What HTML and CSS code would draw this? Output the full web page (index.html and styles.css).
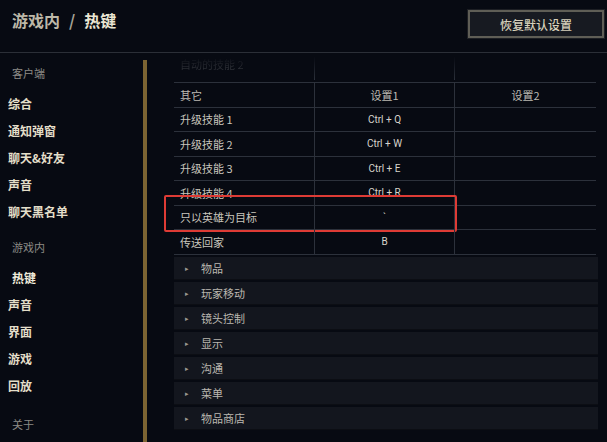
FILE: index.html
```html
<!DOCTYPE html>
<html lang="zh-CN">
<head>
    <meta charset="UTF-8">
    <title>游戏内 / 热键</title>
    <link rel="stylesheet" href="styles.css">
</head>
<body>
    <div class="top">
        <h1 class="title"><span class="crumb">游戏内</span><span class="sep">/</span><span>热键</span></h1>
        <button class="reset">恢复默认设置</button>
    </div>
    <div class="main">
        <nav class="side">
            <div class="group">客户端</div>
            <a class="item">综合</a>
            <a class="item">通知弹窗</a>
            <a class="item">聊天&amp;好友</a>
            <a class="item">声音</a>
            <a class="item">聊天黑名单</a>
            <div class="group gap">游戏内</div>
            <a class="item active">热键</a>
            <a class="item">声音</a>
            <a class="item">界面</a>
            <a class="item">游戏</a>
            <a class="item">回放</a>
            <div class="group about">关于</div>
        </nav>
        <div class="scroll"></div>
        <div class="content">
            <div class="row faded">
                <div class="cell name">自动的技能 2</div>
                <div class="cell"></div>
                <div class="cell"></div>
            </div>
            <div class="row head">
                <div class="cell name">其它</div>
                <div class="cell">设置1</div>
                <div class="cell">设置2</div>
            </div>
            <div class="row">
                <div class="cell name">升级技能 1</div>
                <div class="cell key">Ctrl + Q</div>
                <div class="cell"></div>
            </div>
            <div class="row">
                <div class="cell name">升级技能 2</div>
                <div class="cell key">Ctrl + W</div>
                <div class="cell"></div>
            </div>
            <div class="row">
                <div class="cell name">升级技能 3</div>
                <div class="cell key">Ctrl + E</div>
                <div class="cell"></div>
            </div>
            <div class="row">
                <div class="cell name">升级技能 4</div>
                <div class="cell key">Ctrl + R</div>
                <div class="cell"></div>
            </div>
            <div class="row marked">
                <div class="cell name">只以英雄为目标</div>
                <div class="cell key">`</div>
                <div class="cell"></div>
                <div class="highlight"></div>
            </div>
            <div class="row">
                <div class="cell name">传送回家</div>
                <div class="cell key">B</div>
                <div class="cell"></div>
            </div>

            <div class="sections">
                <div class="section"><span class="arrow">▸</span>物品</div>
                <div class="section"><span class="arrow">▸</span>玩家移动</div>
                <div class="section"><span class="arrow">▸</span>镜头控制</div>
                <div class="section"><span class="arrow">▸</span>显示</div>
                <div class="section"><span class="arrow">▸</span>沟通</div>
                <div class="section"><span class="arrow">▸</span>菜单</div>
                <div class="section"><span class="arrow">▸</span>物品商店</div>
            </div>
        </div>
    </div>
</body>
</html>
```

FILE: styles.css
```css
body {
    margin: 0;
    width: 607px;
    height: 442px;
    overflow: hidden;
    background: #070a12;
    font-family: "Noto Sans CJK SC", "Noto Sans", sans-serif;
    color: #cfcabb;
}

.top {
    display: flex;
    align-items: flex-start;
    justify-content: space-between;
    box-sizing: border-box;
    height: 53px;
    border-bottom: 1px solid #2b2f37;
}

.title {
    margin: 8px 0 0 12px;
    font-size: 16px;
    line-height: 24px;
    font-weight: bold;
    color: #ebe6d3;
}

.title .crumb {
    color: #bdb8a8;
}

.title .sep {
    margin: 0 9px;
    color: #a6a295;
}

.reset {
    margin: 10px 3px 0 0;
    width: 136px;
    height: 28px;
    background: #171a21;
    border: 2px solid #5f5e56;
    outline: 1px solid #1d1f24;
    color: #d6d0bb;
    font-family: inherit;
    font-size: 12px;
    font-weight: 500;
    padding: 0;
}

.main {
    display: flex;
    height: 389px;
}

.side {
    width: 143px;
    padding-top: 10px;
    display: flex;
    flex-direction: column;
}

.group {
    height: 20px;
    line-height: 20px;
    font-size: 11px;
    color: #8c8b86;
    padding-left: 12px;
    margin-bottom: 7px;
}

.group.gap {
    margin-top: 12px;
}

.group.about {
    margin-top: 15px;
}

.item {
    height: 27px;
    line-height: 27px;
    font-size: 12px;
    font-weight: bold;
    color: #e3dec9;
    padding-left: 8px;
}

.item.active {
    padding-left: 12px;
    color: #f0ecdc;
}

.scroll {
    width: 4px;
    margin-top: 7px;
    background: #7c6432;
}

.content {
    width: 422px;
    margin-left: 27px;
}

.row {
    position: relative;
    display: grid;
    grid-template-columns: 140px 140px 142px;
    height: 24.5px;
    border-bottom: 1px solid #2c313b;
    box-sizing: border-box;
    font-size: 11px;
}

.row.faded {
    height: 30px;
}

.row.faded .cell {
    align-items: flex-start;
    margin-top: 3px;
    height: 24px;
    color: #4a4c52;
    mask-image: linear-gradient(#0000, #000);
}

.cell {
    display: flex;
    align-items: center;
    justify-content: center;
    border-left: 1px solid #2c313b;
    color: #cac7bf;
}

.cell.name {
    justify-content: flex-start;
    padding-left: 6px;
    border-left: none;
    color: #c9c6bd;
}

.row.head .cell {
    color: #bdbab2;
}

.cell.key {
    font-family: "Roboto", "Noto Sans", sans-serif;
    font-size: 10px;
    color: #d7d4cc;
}

.highlight {
    position: absolute;
    left: -10px;
    top: -11px;
    width: 293px;
    height: 37px;
    border: 2.5px solid #de3b35;
    border-radius: 2px;
    box-sizing: border-box;
}

.sections {
    margin-top: 2px;
    display: flex;
    flex-direction: column;
    gap: 2px;
}

.section {
    height: 23px;
    box-sizing: border-box;
    background: #13161e;
    border-bottom: 1px solid #0c0e14;
    display: flex;
    align-items: center;
    font-size: 11px;
    color: #bbb8b0;
    width: 424px;
}

.arrow {
    font-size: 7px;
    color: #9a9890;
    margin: 0 12px 0 11px;
}
```
